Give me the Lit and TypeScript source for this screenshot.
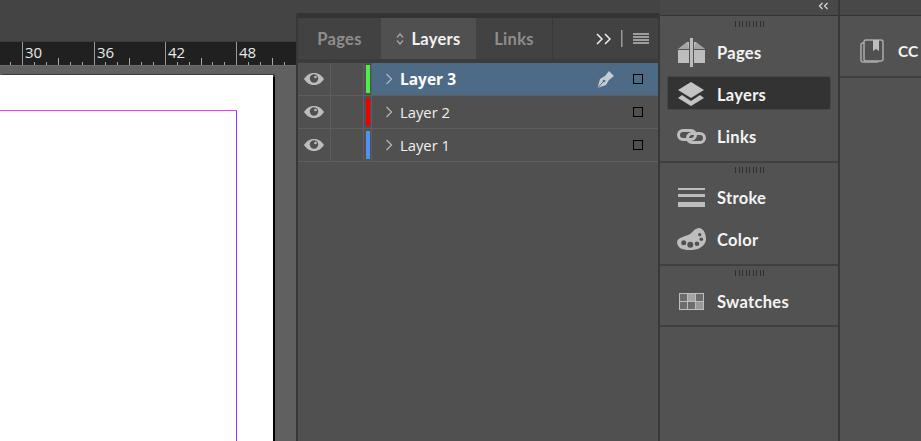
import { LitElement, html, css, svg } from "lit";
import { customElement } from "lit/decorators.js";

const eye = html`<svg width="20" height="12" viewBox="0 0 20 12"><path d="M0 6C3 1.500 6.500 0 10 0s7 1.500 10 6c-3 4.500-6.500 6-10 6S3 10.500 0 6z" fill="#bdbdbd"/><circle cx="10" cy="5.500" r="4.200" fill="#505050"/><circle cx="11.500" cy="4" r="1.300" fill="#bdbdbd"/></svg>`;
const chev = html`<svg width="8" height="12" viewBox="0 0 8 12"><path d="M1.500 1l5 5-5 5" fill="none" stroke="#b4b4b4" stroke-width="1.300"/></svg>`;

const rulerTicks = () => {
  const out = [];
  const start = 22.3 - 71.3;
  for (let i = 0; i < 30; i++) {
    const x = Math.round(start + (i * 71.3) / 6) + 0.5;
    if (x < 0 || x > 296) continue;
    const h = i % 6 === 0 ? 23 : i % 3 === 0 ? 7 : 3;
    out.push(svg`<line x1=${x} x2=${x} y1=${23 - h} y2="23" stroke=${i % 6 === 0 ? "#9a9a9a" : "#a8a8a8"}/>`);
  }
  return out;
};

const layers = [
  { name: "Layer 3", color: "#4cf04c", active: true },
  { name: "Layer 2", color: "#f00000", active: false },
  { name: "Layer 1", color: "#4f94f5", active: false },
];

@customElement("app-root")
export class AppRoot extends LitElement {
  static styles = css`
    :host { display: block; width: 921px; height: 441px; overflow: hidden; font-family: "Open Sans", "Liberation Sans", sans-serif; background: #525252; color: #f0f0f0; }
    .root { display: flex; height: 441px; }
    .doc { width: 296px; flex: none; display: flex; flex-direction: column; background: #606060; overflow: hidden; }
    .topbar { height: 41px; background: #444; border-bottom: 1px solid #3c3c3c; flex: none; }
    .ruler { height: 23px; background: #202020; flex: none; position: relative; overflow: hidden; border-bottom: 1px solid #6c6c6c; }
    .ruler svg { display: block; }
    .ruler span { position: absolute; top: 0; font-size: 15px; line-height: 20px; color: #e8e8e8; }
    .work { flex: 1; padding-top: 9px; min-height: 0; }
    .page { width: 273px; height: 100%; background: #fff; box-shadow: 2px 2px 0 #000, 2px -1px 0 #3c3c3c; padding-top: 35px; }
    .guide { width: 236px; height: 100%; border-top: 1px solid #f040ff; border-right: 1px solid #a030ff; }
    .panel { width: 364px; flex: none; display: flex; flex-direction: column; }
    .ptop { height: 13px; background: #444; flex: none; }
    .pbody { flex: 1; display: flex; flex-direction: column; background: #505050; border-left: 2px solid #383838; border-right: 2px solid #383838; }
    .pbar { height: 5px; background: #333; flex: none; }
    .tabs { height: 41px; flex: none; display: flex; align-items: stretch; background: #424242; border-bottom: 4px solid #3c3c3c; font-family: Lato, "Open Sans", sans-serif; font-weight: 700; font-size: 16.500px; letter-spacing: 0.300px; }
    .tab { display: flex; align-items: center; justify-content: center; color: #8e8e8e; padding-top: 1px; box-sizing: border-box; }
    .tab.p { width: 83px; }
    .tab.l { width: 95px; background: #505050; color: #f2f2f2; gap: 7px; }
    .tab.k { width: 77px; border-right: 1px solid #393939; }
    .tools { flex: 1; display: flex; align-items: center; justify-content: flex-end; gap: 10px; padding-right: 9px; }
    .row { height: 32px; display: flex; align-items: stretch; border-bottom: 1px solid #5e5e5e; flex: none; font-size: 14.800px; }
    .c1 { width: 33px; border-right: 1px solid #5e5e5e; display: flex; align-items: center; justify-content: center; box-sizing: border-box; }
    .c2 { width: 33px; border-right: 1px solid #5e5e5e; box-sizing: border-box; }
    .c3 { width: 8px; border-right: 1px solid #5e5e5e; display: flex; align-items: center; padding-left: 2px; box-sizing: border-box; }
    .c3 i { display: block; width: 4px; height: 28px; }
    .main { flex: 1; display: flex; align-items: center; padding-left: 13px; gap: 7px; }
    .row.on .main { background: #4d6a87; font-weight: 700; color: #fff; font-size: 15.500px; }
    .pen { margin-right: 12px; display: block; }
    .box { width: 8px; height: 8px; border: 1px solid #000; margin-right: 15px; flex: none; }
    .spacer { flex: 1; }
    .dock { width: 180px; flex: none; display: flex; flex-direction: column; box-sizing: border-box; border-right: 2px solid #383838; }
    .dtop { height: 15px; box-sizing: content-box; background: #484848; border-bottom: 1px solid #333; flex: none; display: flex; align-items: flex-start; justify-content: flex-end; padding-right: 9px; }
    .dtop svg { margin-top: 2px; }
    .group { border-bottom: 2px solid #3f3f3f; display: flex; flex-direction: column; flex: none; box-sizing: border-box; }
    .grip { height: 6px; flex: none; margin: 4px auto 0; width: 29px; background: repeating-linear-gradient(90deg, #2e2e2e 0 1px, transparent 1px 3.500px); }
    .items { display: flex; flex-direction: column; gap: 8px; margin-top: 7px; }
    .item { height: 32px; margin: 0 7px; display: flex; align-items: center; font-family: Lato, "Open Sans", sans-serif; font-weight: 700; font-size: 16.500px; letter-spacing: 0.300px; color: #f4f4f4; border: 1px solid transparent; border-radius: 2px; flex: none; box-sizing: content-box; }
    .item span { margin-top: 2px; }
    .item.on { background: #333; border-color: #484848; }
    .ic { width: 46px; padding-right: 3px; display: flex; justify-content: center; flex: none; }
    .g1 { height: 147px; }
    .g1 .grip { margin-top: 5px; }
    .g1 .item { height: 30px; padding-top: 2px; }
    .g2 { height: 103px; }
    .g3 { height: 61px; }
    .g3 .items { margin-top: 8px; }
    .cc { flex: 1; display: flex; flex-direction: column; }
    .ctop { height: 15px; background: #484848; border-bottom: 1px solid #333; flex: none; }
    .ccrow { height: 62px; box-sizing: border-box; flex: none; border-bottom: 2px solid #3f3f3f; display: flex; align-items: center; padding: 10px 0 0 20px; gap: 14px; font-family: Lato, "Open Sans", sans-serif; font-weight: 700; font-size: 15.500px; color: #f4f4f4; }
  `;

  render() {
    return html`<div class="root">
      <div class="doc">
        <div class="topbar"></div>
        <div class="ruler">
          <svg width="296" height="23">${rulerTicks()}</svg>
          <span style="left:25px">30</span><span style="left:97px">36</span><span style="left:168px">42</span><span style="left:239px">48</span>
        </div>
        <div class="work"><div class="page"><div class="guide"></div></div></div>
      </div>
      <div class="panel">
        <div class="ptop"></div>
        <div class="pbody">
        <div class="pbar"></div>
        <div class="tabs">
          <div class="tab p">Pages</div>
          <div class="tab l">
            <svg width="8" height="12" viewBox="0 0 8 12"><path d="M1 4.500L4 1l3 3.500M1 7.500L4 11l3-3.500" fill="none" stroke="#aaa" stroke-width="1.200"/></svg>
            <span>Layers</span></div>
          <div class="tab k">Links</div>
          <div class="tools">
            <svg width="15" height="12" viewBox="0 0 15 12"><path d="M1 1l5 5-5 5M9 1l5 5-5 5" fill="none" stroke="#eee" stroke-width="1.500"/></svg>
            <svg width="2" height="17" viewBox="0 0 2 17"><rect width="1.500" height="17" fill="#999"/></svg>
            <svg width="16" height="12" viewBox="0 0 16 12"><path d="M0 1h16M0 4h16M0 7h16M0 10h16" stroke="#bdbdbd" stroke-width="1.400"/></svg>
          </div>
        </div>
        ${layers.map((l) => html`<div class="row ${l.active ? "on" : ""}">
          <div class="c1">${eye}</div><div class="c2"></div>
          <div class="c3"><i style="background:${l.color}"></i></div>
          <div class="main">${chev}<span>${l.name}</span><div class="spacer"></div>
            ${l.active
              ? html`<svg class="pen" width="17" height="17" viewBox="0 0 17 17"><path d="M0.500 17L3 8l5-3 4-5 5 5-5 4-3 5z" fill="#c4ccd4"/><path d="M0.500 17L6 11" stroke="#4d6a87"/><circle cx="7" cy="10" r="1.300" fill="#4d6a87"/></svg>`
              : ""}
            <div class="box"></div>
          </div>
        </div>`)}
        </div>
      </div>
      <div class="dock">
        <div class="dtop"><svg width="11" height="8" viewBox="0 0 11 8"><path d="M4.500 1L1.500 4l3 3M9.500 1l-3 3 3 3" fill="none" stroke="#ddd" stroke-width="1.200"/></svg></div>
        <div class="group g1"><div class="grip"></div><div class="items">
          <div class="item"><div class="ic"><svg width="27" height="29" viewBox="0 0 27 29"><rect x="12" width="3" height="29" fill="#bdbdbd"/><path d="M0 11h11V4H9zM27 11H16V4h2zM0 12h11v13H0zM16 12h11v13H16z" fill="#bdbdbd"/><path d="M0 11L9 4l2 7zM27 11L18 4l-2 7z" fill="#8a8a8a" opacity="0.500"/></svg></div><span>Pages</span></div>
          <div class="item on"><div class="ic"><svg width="26" height="25" viewBox="0 0 26 25"><path d="M13 0l13 8-13 8L0 8z" fill="#c4c4c4"/><path d="M0 16l4-3 9 6 9-6 4 3-13 8z" fill="#c4c4c4"/></svg></div><span>Layers</span></div>
          <div class="item"><div class="ic"><svg width="29" height="15" viewBox="0 0 29 15"><rect x="1.500" y="1.500" width="17" height="9" rx="4.500" fill="none" stroke="#bdbdbd" stroke-width="3"/><rect x="10.500" y="4.500" width="17" height="9" rx="4.500" fill="none" stroke="#bdbdbd" stroke-width="3"/></svg></div><span>Links</span></div>
        </div></div>
        <div class="group g2"><div class="grip"></div><div class="items">
          <div class="item"><div class="ic"><svg width="27" height="19" viewBox="0 0 27 19"><rect y="0" width="27" height="2" fill="#bdbdbd"/><rect y="6" width="27" height="3" fill="#bdbdbd"/><rect y="14" width="27" height="5" fill="#bdbdbd"/></svg></div><span>Stroke</span></div>
          <div class="item"><div class="ic"><svg width="29" height="22" viewBox="0 0 29 22"><path d="M0 14C1 9 8 9 13 6c3-2 5-6 9-6 4 0 7 5 7 11 0 5-4 8-8 10-5 1.500-12 1.500-16 0-3-1-5-4-5-7z" fill="#bdbdbd"/><g fill="#505050"><circle cx="6.700" cy="14.700" r="2.500"/><circle cx="13.300" cy="16.700" r="3"/><circle cx="20" cy="15.700" r="2.300"/><circle cx="24.300" cy="11.300" r="1.800"/><circle cx="22.700" cy="6.700" r="1.600"/></g></svg></div><span>Color</span></div>
        </div></div>
        <div class="group g3"><div class="grip"></div><div class="items">
          <div class="item"><div class="ic"><svg width="25" height="17" viewBox="0 0 25 17"><rect width="25" height="17" fill="#bdbdbd"/><g fill="#6c6c6c"><rect x="1" y="1" width="7" height="7"/><rect x="17" y="1" width="7" height="7"/><rect x="9" y="9" width="7" height="7"/><rect x="1" y="9" width="7" height="7"/></g><rect x="9" y="1" width="7" height="7" fill="#a5a5a5"/><rect x="17" y="9" width="7" height="7" fill="#999"/></svg></div><span>Swatches</span></div>
        </div></div>
      </div>
      <div class="cc">
        <div class="ctop"></div>
        <div class="ccrow"><svg width="24" height="24" viewBox="0 0 24 24"><rect x="1" y="4" width="18" height="19" rx="2" fill="none" stroke="#aaa" stroke-width="1.500"/><rect x="4" y="1" width="19" height="21" rx="2" fill="#505050" stroke="#aaa" stroke-width="1.500"/><path d="M13 1h6v11l-3-2-3 2z" fill="#bdbdbd"/></svg><span>CC</span></div>
      </div>
    </div>`;
  }
}
